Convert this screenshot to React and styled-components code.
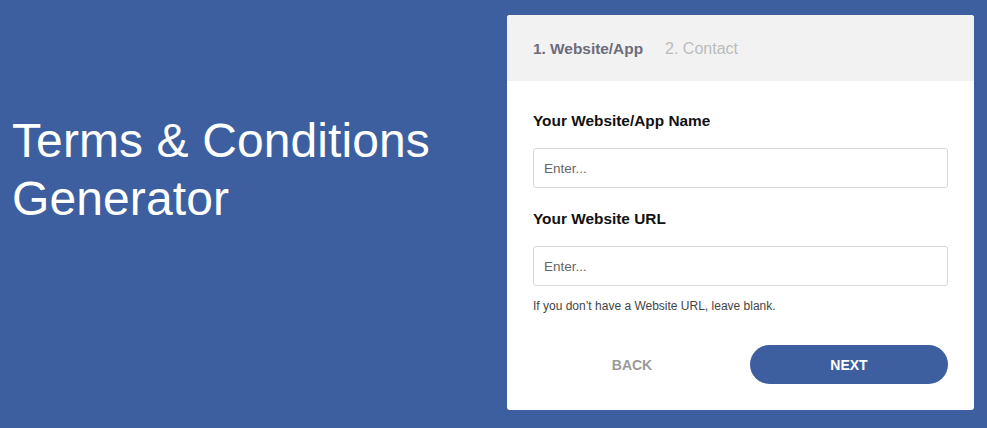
import React from "react";
import styled, { createGlobalStyle } from "styled-components";

const Global = createGlobalStyle`
  html, body { margin: 0; padding: 0; background: #3d5fa0; }
  body { font-family: "Liberation Sans", Arial, sans-serif; }
  * { box-sizing: border-box; }
`;

const Page = styled.div`
  width: 987px;
  height: 428px;
  background: #3d5fa0;
  display: flex;
  align-items: flex-start;
  justify-content: space-between;
  overflow: hidden;
`;

const Hero = styled.h1`
  margin: 112px 0 0 12px;
  font-size: 48px;
  line-height: 58px;
  font-weight: 400;
  color: #ffffff;
  letter-spacing: 0.1px;
`;

const Card = styled.div`
  margin: 15px 13px 0 0;
  width: 467px;
  background: #ffffff;
  border-radius: 3px;
  overflow: hidden;
`;

const Tabs = styled.div`
  height: 66px;
  background: #f2f2f2;
  display: flex;
  align-items: center;
  gap: 22px;
  padding: 2px 26px 0;
`;

const Tab = styled.span`
  font-size: ${(p) => (p.$active ? "15.4px" : "16px")};
  font-weight: ${(p) => (p.$active ? 700 : 400)};
  color: ${(p) => (p.$active ? "#6c6c7b" : "#bcbcbc")};
`;

const Body = styled.div`
  padding: 30px 26px 26px;
  display: flex;
  flex-direction: column;
`;

const Label = styled.label`
  font-size: 15.4px;
  line-height: 18px;
  font-weight: 700;
  color: #111;
  margin: ${(p) => (p.$first ? "1px" : "22px")} 0 ${(p) => (p.$first ? "18px" : "18px")};
`;

const Input = styled.input`
  height: 40px;
  width: 100%;
  border: 1px solid #d8d8d8;
  border-radius: 3px;
  padding: 0 10px;
  font-family: "Liberation Sans", Arial, sans-serif;
  font-size: 13.5px;
  color: #333;
  outline: none;
  &::placeholder { color: #666; }
`;

const Help = styled.p`
  margin: 13px 0 0;
  font-size: 12px;
  line-height: 14px;
  color: #444;
`;

const Actions = styled.div`
  margin-top: 32px;
  display: grid;
  grid-template-columns: 1fr 1fr;
  gap: 19px;
`;

const Button = styled.button`
  height: 39px;
  border: none;
  border-radius: 20px;
  font-family: "Liberation Sans", Arial, sans-serif;
  font-size: 14px;
  font-weight: 700;
  background: ${(p) => (p.$primary ? "#3d5fa0" : "transparent")};
  color: ${(p) => (p.$primary ? "#ffffff" : "#9a9a9a")};
  cursor: pointer;
`;

export default function App() {
  return (
    <>
      <Global />
      <Page>
        <Hero>
          Terms &amp; Conditions
          <br />
          Generator
        </Hero>
        <Card>
          <Tabs>
            <Tab $active>1. Website/App</Tab>
            <Tab>2. Contact</Tab>
          </Tabs>
          <Body>
            <Label $first>Your Website/App Name</Label>
            <Input placeholder="Enter..." />
            <Label>Your Website URL</Label>
            <Input placeholder="Enter..." />
            <Help>If you don’t have a Website URL, leave blank.</Help>
            <Actions>
              <Button>BACK</Button>
              <Button $primary>NEXT</Button>
            </Actions>
          </Body>
        </Card>
      </Page>
    </>
  );
}
